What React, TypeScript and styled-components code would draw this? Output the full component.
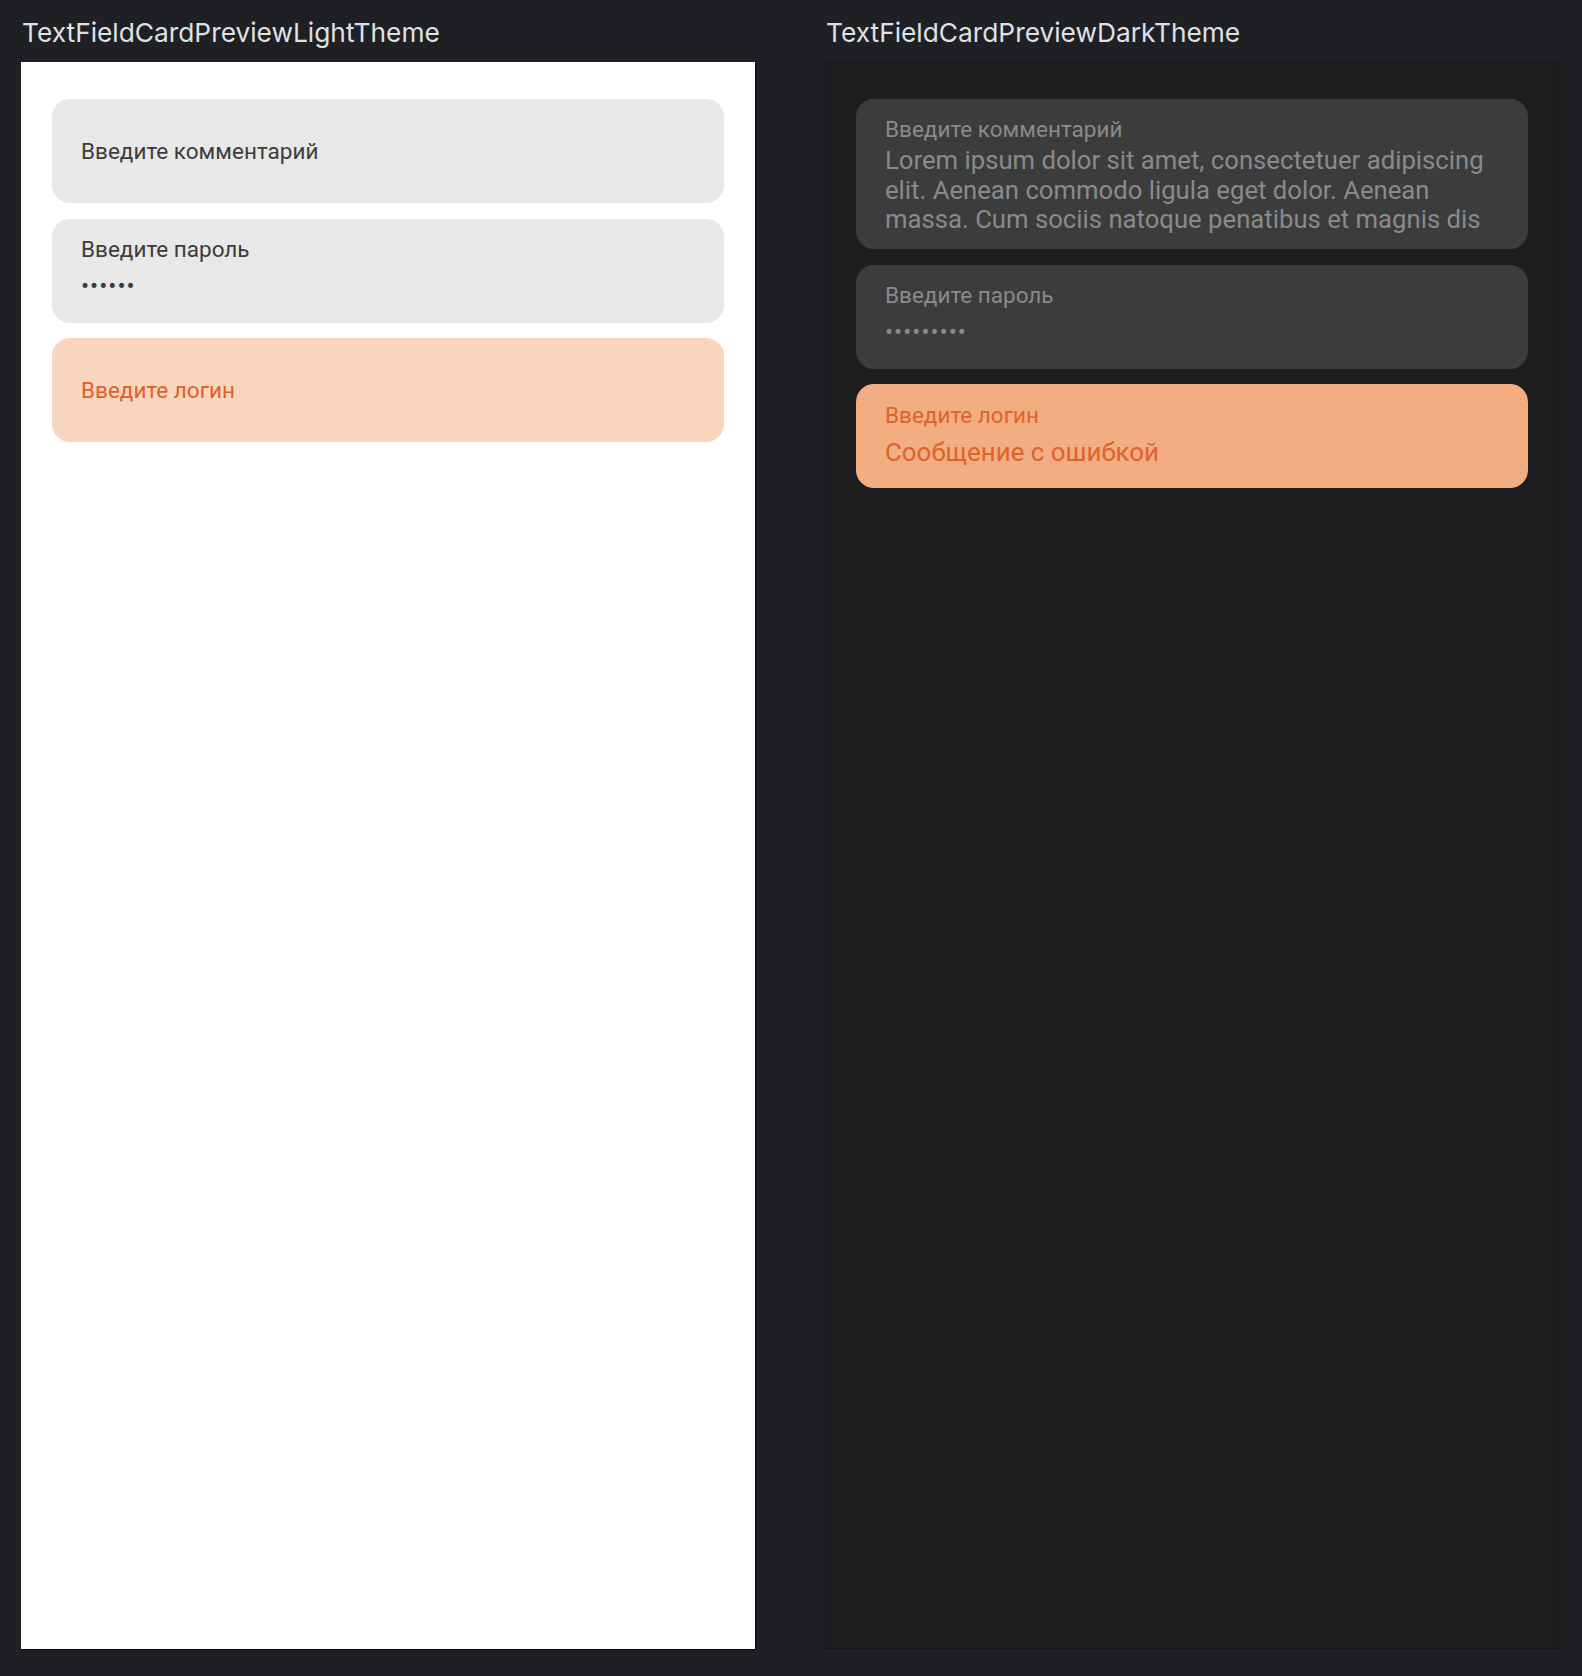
import React from 'react'
import styled, { createGlobalStyle } from 'styled-components'

const GlobalStyle = createGlobalStyle`
  html, body {
    margin: 0;
    padding: 0;
    background: #1f2023;
  }
`

const Page = styled.div`
  display: flex;
  gap: 70px;
  padding: 18px 0 0 21px;
  min-height: 1676px;
  box-sizing: border-box;
  background: #1f2023;
`

const Column = styled.div`
  display: flex;
  flex-direction: column;
  width: 734px;
`

const Title = styled.div`
  font-family: Inter, "Noto Sans", sans-serif;
  font-size: 26.3px;
  line-height: 30px;
  color: #dfe1e5;
  margin: 0 0 14px 1px;
`

const Preview = styled.div<{ dark?: boolean }>`
  height: 1587px;
  box-sizing: border-box;
  display: flex;
  flex-direction: column;
  gap: 15.5px;
  padding: ${p => (p.dark ? '36px 30px 0 30px' : '37px 31px 0 31px')};
  background: ${p => (p.dark ? '#1e1e1e' : '#ffffff')};
  border: ${p => (p.dark ? '1px solid #171717' : 'none')};
  box-shadow: ${p => (p.dark ? 'none' : '1px 1px 1px rgba(0,0,0,0.7)')};
`

const Card = styled.div<{ bg: string; filled?: boolean }>`
  box-sizing: border-box;
  min-height: 104px;
  border-radius: 18px;
  background: ${p => p.bg};
  padding: ${p => (p.filled ? '17.3px 29px 14.6px 29px' : '0 29px')};
  display: flex;
  flex-direction: column;
  justify-content: ${p => (p.filled ? 'flex-start' : 'center')};
  font-family: Roboto, "Liberation Sans", sans-serif;
`

const Label = styled.div<{ color: string }>`
  font-size: 22.5px;
  line-height: 27px;
  color: ${p => p.color};
`

const Value = styled.div<{ color: string }>`
  margin-top: 3px;
  font-size: 25.7px;
  line-height: 29.5px;
  color: ${p => p.color};
`

const ErrorText = styled.div<{ color: string }>`
  margin-top: 8.8px;
  font-size: 25.9px;
  line-height: 30px;
  color: ${p => p.color};
`

const Dots = styled.div<{ color: string }>`
  margin-top: 13px;
  font-size: 24px;
  line-height: 20px;
  letter-spacing: 1px;
  color: ${p => p.color};
`

const light = {
  card: '#e8e8e8',
  text: '#3c3c3c',
  errorCard: '#f8d5bf',
  errorText: '#e06127',
}

const dark = {
  card: '#3c3c3c',
  text: '#8a8a8a',
  errorCard: '#f2ad83',
  errorText: '#e0622a',
}

const lorem =
  'Lorem ipsum dolor sit amet, consectetuer adipiscing elit. Aenean commodo ligula eget dolor. Aenean massa. Cum sociis natoque penatibus et magnis dis'

export default function App() {
  return (
    <>
      <GlobalStyle />
      <Page>
        <Column>
          <Title>TextFieldCardPreviewLightTheme</Title>
          <Preview>
            <Card bg={light.card}>
              <Label color={light.text}>Введите комментарий</Label>
            </Card>
            <Card bg={light.card} filled>
              <Label color={light.text}>Введите пароль</Label>
              <Dots color={light.text}>••••••</Dots>
            </Card>
            <Card bg={light.errorCard}>
              <Label color={light.errorText}>Введите логин</Label>
            </Card>
          </Preview>
        </Column>
        <Column>
          <Title>TextFieldCardPreviewDarkTheme</Title>
          <Preview dark>
            <Card bg={dark.card} filled>
              <Label color={dark.text}>Введите комментарий</Label>
              <Value color={dark.text}>{lorem}</Value>
            </Card>
            <Card bg={dark.card} filled>
              <Label color={dark.text}>Введите пароль</Label>
              <Dots color={dark.text}>•••••••••</Dots>
            </Card>
            <Card bg={dark.errorCard} filled>
              <Label color={dark.errorText}>Введите логин</Label>
              <ErrorText color={dark.errorText}>Сообщение с ошибкой</ErrorText>
            </Card>
          </Preview>
        </Column>
      </Page>
    </>
  )
}
